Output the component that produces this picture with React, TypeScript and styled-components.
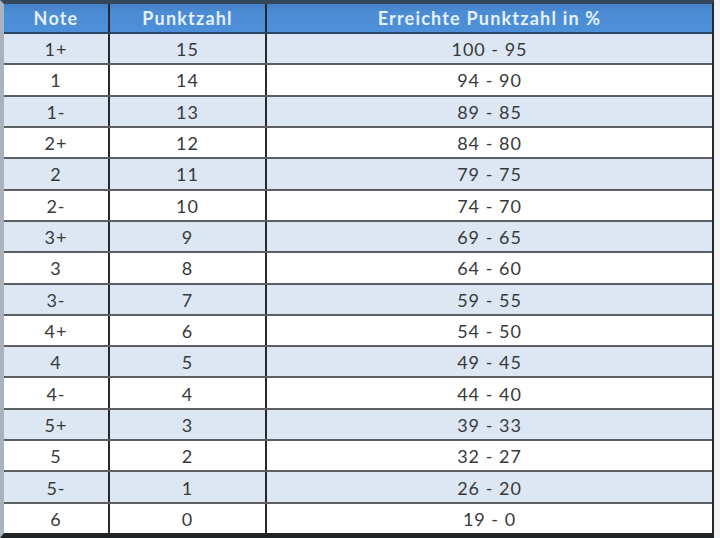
import React from "react";
import styled, { createGlobalStyle } from "styled-components";

const GlobalStyle = createGlobalStyle`
  html, body {
    margin: 0;
    padding: 0;
    background: #f2f2f2;
  }
  * {
    box-sizing: border-box;
  }
`;

const COLORS = {
  frameTop: "#34465c",
  frameBottom: "#1f2326",
  frameLeft: "#aab3bd",
  header: "#4b8cd4",
  headerText: "#e4f1ff",
  headerLine: "#2b4565",
  stripe: "#dce7f3",
  plain: "#ffffff",
  rowLine: "#5b5f63",
  colLine: "#26292c",
  text: "#37393b",
};

const ROWS: [string, string, string][] = [
  ["1+", "15", "100 - 95"],
  ["1", "14", "94 - 90"],
  ["1-", "13", "89 - 85"],
  ["2+", "12", "84 - 80"],
  ["2", "11", "79 - 75"],
  ["2-", "10", "74 - 70"],
  ["3+", "9", "69 - 65"],
  ["3", "8", "64 - 60"],
  ["3-", "7", "59 - 55"],
  ["4+", "6", "54 - 50"],
  ["4", "5", "49 - 45"],
  ["4-", "4", "44 - 40"],
  ["5+", "3", "39 - 33"],
  ["5", "2", "32 - 27"],
  ["5-", "1", "26 - 20"],
  ["6", "0", "19 - 0"],
];

const Page = styled.div`
  width: 720px;
  height: 538px;
  display: flex;
  flex-direction: row;
  background: #f2f2f2;
  font-family: Lato, "Liberation Sans", sans-serif;
`;

const Sheet = styled.div`
  width: 714px;
  height: 538px;
  display: flex;
  flex-direction: column;
  border-top: 4px solid ${COLORS.frameTop};
  border-left: 4px solid ${COLORS.frameLeft};
  border-right: 2px solid ${COLORS.colLine};
  border-bottom: 5px solid ${COLORS.frameBottom};
`;

const HeaderRow = styled.div`
  display: grid;
  grid-template-columns: 106px 157px 1fr;
  height: 30px;
  flex-shrink: 0;
  background: linear-gradient(#437fc4, ${COLORS.header} 30%, #4d8fd8);
  border-bottom: 2px solid ${COLORS.headerLine};
`;

const Body = styled.div`
  flex: 1;
  display: flex;
  flex-direction: column;
`;

const Row = styled.div<{ $striped: boolean }>`
  flex: 1;
  display: grid;
  grid-template-columns: 106px 157px 1fr;
  background: ${(p) => (p.$striped ? COLORS.stripe : COLORS.plain)};
  border-bottom: 2px solid ${COLORS.rowLine};

  &:last-child {
    border-bottom: none;
  }
`;

const HeadCell = styled.div<{ $last?: boolean }>`
  display: flex;
  align-items: center;
  justify-content: center;
  color: ${COLORS.headerText};
  font-size: 18px;
  font-weight: 700;
  letter-spacing: 1.2px;
  border-right: ${(p) => (p.$last ? "none" : `2px solid ${COLORS.colLine}`)};
`;

const Cell = styled.div<{ $last?: boolean }>`
  display: flex;
  align-items: center;
  justify-content: center;
  color: ${COLORS.text};
  font-size: 18px;
  letter-spacing: 1px;
  padding-top: 1px;
  border-right: ${(p) => (p.$last ? "none" : `2px solid ${COLORS.colLine}`)};
`;

export default function App() {
  return (
    <>
      <GlobalStyle />
      <Page>
        <Sheet>
          <HeaderRow>
            <HeadCell>Note</HeadCell>
            <HeadCell>Punktzahl</HeadCell>
            <HeadCell $last>Erreichte Punktzahl in %</HeadCell>
          </HeaderRow>
          <Body>
            {ROWS.map(([note, points, percent], i) => (
              <Row key={note} $striped={i % 2 === 0}>
                <Cell>{note}</Cell>
                <Cell>{points}</Cell>
                <Cell $last>{percent}</Cell>
              </Row>
            ))}
          </Body>
        </Sheet>
      </Page>
    </>
  );
}
